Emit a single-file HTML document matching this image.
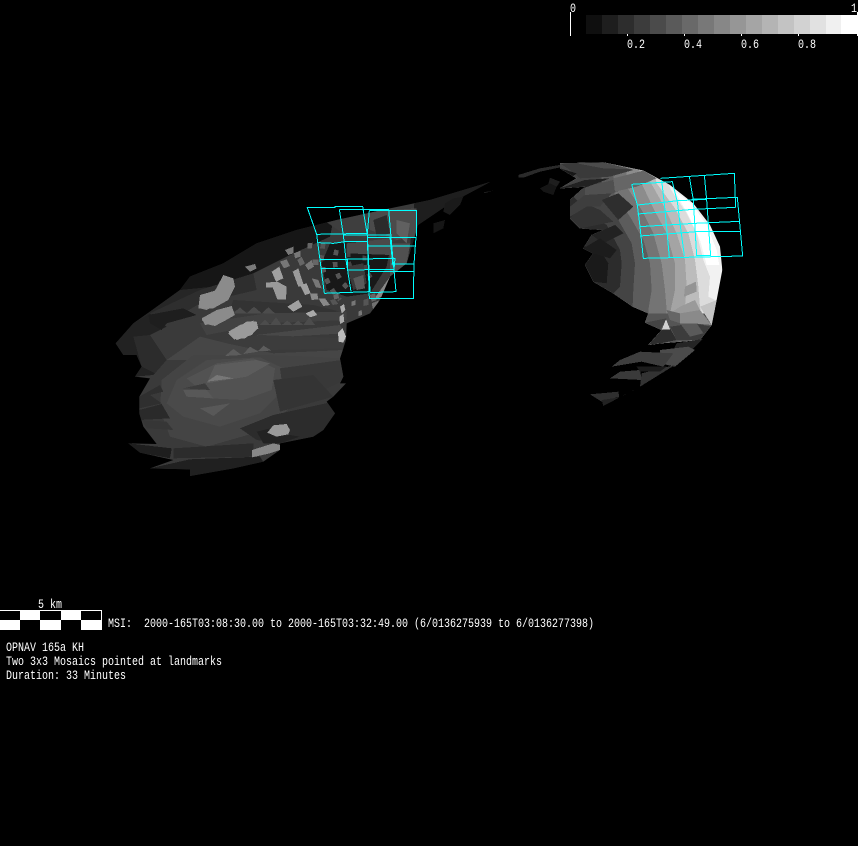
<!DOCTYPE html>
<html><head><meta charset="utf-8"><style>
html,body{margin:0;padding:0;background:#000;width:858px;height:846px;overflow:hidden}
svg{display:block}
text{font-family:"Liberation Mono",monospace;font-size:13px;fill:#fff;white-space:pre}
</style></head><body>
<svg width="858" height="846" viewBox="0 0 858 846" xmlns="http://www.w3.org/2000/svg" shape-rendering="crispEdges">
<defs>
<clipPath id="cl"><polygon points="47,190 100,130 150,95 240,30 270,-10 370,-50 470,-110 590,-150 710,-180 870,-215 990,-240 1170,-294 1050,-230 954,-165 950,-150 920,-50 870,-10 840,60 810,100 740,130 738,180 720,235 730,290 720,310 738,310 700,350 680,365 705,400 670,450 640,470 540,490 540,510 490,545 400,565 270,588 270,568 150,565 220,540 120,518 85,490 170,492 130,440 118,400 118,350 150,295 105,290 125,260 110,225 70,225"/></clipPath>
<clipPath id="cr"><polygon points="0,40 130,37 250,62 330,105 400,160 450,225 480,290 487,360 470,450 455,525 420,570 300,580 265,585 305,540 255,518 265,490 218,470 160,430 100,395 75,345 100,310 70,295 95,255 130,240 60,235 30,205 30,150 75,110 0,115 50,85 0,55"/></clipPath>
</defs>
<rect width="858" height="846" fill="#000"/>

<!-- left lobe -->
<g transform="translate(100 280) scale(.33333)">
<g clip-path="url(#cl)">
<rect x="0" y="-320" width="1200" height="920" fill="#3a3a3a"/>
<polygon fill="#1e1e1e" points="950,-300 1200,-300 1200,0 920,0"/>
<polygon fill="#161616" points="240,30 270,-10 370,-50 470,-110 590,-150 700,-180 690,-130 560,-70 460,-20 340,20 250,60"/>
<polygon fill="#262626" points="100,130 240,30 340,20 300,60 180,110 130,170"/>
<polygon fill="#2e2e2e" points="150,100 300,30 460,-20 470,30 300,70 200,130"/>
<polygon fill="#222" points="47,190 100,130 150,100 200,140 150,165 200,240 160,285 105,290 125,260 110,225 70,225"/>
<polygon fill="#1e1e1e" points="145,105 250,85 290,105 200,130 185,150 150,130"/>
<polygon fill="#2c2c2c" points="100,170 150,165 200,240 165,280 125,260"/>
<polygon fill="#424242" points="300,130 500,100 740,95 740,120 500,130 320,165"/>
<polygon fill="#333" points="400,60 640,75 720,95 500,100 390,90"/>
<polygon fill="#484848" points="470,165 720,135 735,160 560,170 500,180"/>
<polygon fill="#3c3c3c" points="300,190 480,165 730,175 730,205 500,210"/>
<polygon fill="#464646" points="200,240 300,170 380,190 520,220 730,210 730,235 520,240 330,240"/>
<polygon fill="#444" points="185,300 280,225 500,225 640,230 720,235 725,300 640,330 550,400 460,460 320,500 210,470 180,390"/>
<polygon fill="#4a4a4a" points="230,300 320,240 480,232 560,270 540,340 480,400 360,440 250,410 200,370"/>
<polygon fill="#525252" points="260,295 350,250 460,235 525,265 515,330 430,360 330,355"/>
<polygon fill="#5c5c5c" points="345,255 470,240 510,250 440,290 320,310"/>
<polygon fill="#777" points="320,305 350,285 400,295"/>
<polygon fill="#5c5c5c" points="375,228 400,207 425,225"/>
<polygon fill="#5c5c5c" points="430,222 450,200 475,215"/>
<polygon fill="#5c5c5c" points="475,213 490,197 515,212"/>
<polygon fill="#2f2f2f" points="118,350 180,315 190,335 150,345 185,370 118,385"/>
<polygon fill="#2a2a2a" points="118,390 185,372 210,415 118,420"/>
<polygon fill="#363636" points="125,420 200,425 220,450 140,445"/>
<polygon fill="#3c3c3c" points="250,325 315,310 330,330"/>
<polygon fill="#585858" points="250,330 320,330 340,355 260,350"/>
<polygon fill="#585858" points="300,385 390,370 340,408"/>
<polygon fill="#383838" points="540,265 725,240 735,300 650,340 550,340"/>
<polygon fill="#343434" points="520,300 640,285 700,350 540,395"/>
<polygon fill="#2c2c2c" points="420,445 520,405 700,365 705,400 670,450 640,470 540,490 470,480"/>
<polygon fill="#222" points="470,455 510,445 520,470 570,465 600,470 540,490 490,490"/>
<polygon fill="#1e1e1e" points="85,490 215,505 210,535 120,518"/>
<polygon fill="#2c2c2c" points="220,505 460,490 460,530 220,535"/>
<polygon fill="#202020" points="150,565 270,538 480,530 490,545 400,565 270,588 270,568"/>
<polygon fill="#999" points="502,458 520,436 560,432 570,450 565,463 530,470"/>
<polygon fill="#888" points="456,510 520,490 540,495 540,510 510,520 456,532"/>
<polygon fill="#999" points="385,155 420,135 460,122 473,145 455,165 410,180"/>
<polygon fill="#8a8a8a" points="305,115 350,90 395,78 405,105 370,125 315,135"/>
<polygon fill="#858585" points="298,60 340,42 360,70 320,90 300,85"/>
<path fill="#4c4c4c" d="M480,135L495,120L510,135ZM510,135L528,112L545,135ZM545,135L562,122L578,135ZM578,135L595,122L610,135ZM610,135L628,112L645,135ZM400,100L420,82L440,100ZM440,100L462,80L485,100ZM485,100L505,82L525,100Z"/>

<g transform="translate(270 -240)">
<polygon fill="#3e3e3e" points="400,60 600,25 680,30 670,100 600,130 460,100"/>
<polygon fill="#4b4b4b" points="540,35 680,25 680,110 620,120 540,90"/>
<polygon fill="#2b2b2b" points="550,60 590,45 600,100 560,110"/>
<polygon fill="#606060" points="620,60 660,70 650,130 620,100"/>
<polygon fill="#181818" points="420,130 520,125 600,150 590,200 540,280 470,290 410,270 395,190"/>
<path fill="none" stroke="#555" stroke-width="14" stroke-dasharray="16 20" d="M400,130Q380,220 450,300M440,150Q420,220 480,270"/>
<path fill="none" stroke="#444" stroke-width="12" stroke-dasharray="14 14" d="M480,130Q460,200 520,260M530,140Q510,200 550,240"/>
<polygon fill="#3a3a3a" points="470,200 520,190 530,250 490,270"/>
<polygon fill="#5a5a5a" points="490,235 520,225 525,265 500,270"/>
<polygon fill="#888" points="550,300 600,230 610,225 575,290"/>
<polygon fill="#4a4a4a" points="470,130 600,115 605,165 470,160"/>
<polygon fill="#505050" points="600,130 660,130 650,190 600,230"/>
<polygon fill="#777" points="270,185 290,178 300,198 282,205"/>
<polygon fill="#8b8b8b" points="30,285 75,272 100,225 130,235 135,260 115,300 70,325 25,325"/>
<polygon fill="#8b8b8b" points="35,360 100,325 120,320 135,345 75,378 48,372"/>
<polygon fill="#9a9a9a" points="115,400 170,365 200,365 205,385 165,415 132,418"/>
<polygon fill="#7a7a7a" points="165,200 195,192 200,205 180,215"/>
<polygon fill="#a0a0a0" points="245,215 268,200 280,235 258,245"/>
<polygon fill="#9a9a9a" points="228,248 262,245 290,260 288,298 262,298 248,262 228,262"/>
<polygon fill="#a0a0a0" points="292,320 325,300 337,320 310,335"/>
<polygon fill="#a8a8a8" points="347,340 370,330 382,345 360,352"/>
<polygon fill="#9a9a9a" points="308,215 325,205 342,258 325,260"/>
<polygon fill="#a0a0a0" points="330,255 350,250 362,280 345,285"/>
<polygon fill="#888" points="360,280 382,280 385,298 365,300"/>
<polygon fill="#888" points="385,295 405,295 420,315 400,318"/>
<polygon fill="#777" points="345,195 365,180 372,200 355,210"/>
<polygon fill="#666" points="322,180 335,170 345,190 330,198"/>
<polygon fill="#777" points="365,235 385,240 395,265 378,262"/>
<polygon fill="#777" points="312,160 332,152 332,170 315,175"/>
<polygon fill="#777" points="285,150 310,140 310,160 295,165"/>
<polygon fill="#666" points="352,130 368,128 365,145 352,145"/>
<polygon fill="#666" points="367,178 385,178 385,195 370,195"/>
<polygon fill="#666" points="430,285 445,280 447,295 432,298"/>
<polygon fill="#555" points="420,300 435,298 445,312 428,315"/>
<polygon fill="#707070" points="545,310 565,302 570,335 552,340"/>
<polygon fill="#666" points="540,285 555,280 560,300 545,305"/>
<polygon fill="#555" points="520,300 535,295 535,315 520,318"/>
<polygon fill="#777" points="485,305 497,300 497,315 485,318"/>
</g>
</g>
<g transform="translate(270 -240)">
<polygon fill="#aaa" points="450,320 462,312 466,330 455,340"/>
<polygon fill="#aaa" points="448,350 460,342 463,365 450,372"/>
<polygon fill="#bbb" points="444,398 458,385 468,410 460,428 446,425"/>
<polygon fill="#777" points="505,335 515,330 516,345 506,348"/>
</g>
</g>

<!-- thin middle ridge -->
<g transform="translate(410 155) scale(.33333)">
<polygon fill="#1a1a1a" points="105,145 130,130 160,125 150,150 120,180 100,170"/>
<polygon fill="#1c1c1c" points="220,112 248,107 225,115"/>
<polygon fill="#161616" points="70,205 105,195 100,220 70,235"/>
<polygon fill="#2a2a2a" points="325,60 390,40 460,28 460,35 390,50 340,68 325,68"/>
<polygon fill="#1e1e1e" points="420,68 450,80 440,95 415,88"/>
<polygon fill="#151515" points="390,100 420,85 440,95 430,120 400,110"/>
</g>

<!-- right lobe -->
<g transform="translate(560 150) scale(.33333)">
<g clip-path="url(#cr)">
<rect x="-10" y="0" width="520" height="600" fill="#f2f2f2"/>
<polygon fill="#fff" points="345,125 395,160 440,225 470,300 478,345 440,345 420,270 385,195"/>
<polygon fill="#dcdcdc" points="-10,0 310,0 330,115 380,190 410,250 430,330 450,380 445,440 465,450 470,600 -10,600"/>
<polygon fill="#bcbcbc" points="-10,0 270,0 290,100 345,175 385,250 405,330 415,410 420,470 440,600 -10,600"/>
<polygon fill="#a4a4a4" points="-10,0 250,0 265,85 310,165 350,250 375,330 380,410 375,470 390,600 -10,600"/>
<polygon fill="#8c8c8c" points="-10,0 230,0 240,90 280,175 320,250 345,340 345,420 330,490 340,600 -10,600"/>
<polygon fill="#747474" points="-10,0 200,0 200,110 245,180 280,250 305,340 315,420 320,480 320,600 -10,600"/>
<polygon fill="#5c5c5c" points="-10,0 160,0 160,125 210,200 250,270 270,340 275,420 265,480 265,600 -10,600"/>
<polygon fill="#444" points="-10,0 125,0 125,150 175,210 215,280 225,340 220,420 218,465 218,600 -10,600"/>
<polygon fill="#2c2c2c" points="-10,90 100,200 140,225 180,300 185,340 180,410 160,430 -10,500"/>
<polygon fill="#1a1a1a" points="40,290 80,290 120,300 145,340 140,400 100,395 40,380"/>
<polygon fill="#222" points="60,235 130,240 165,225 190,250 130,280 95,255"/>
<polygon fill="#333" points="30,205 75,160 120,180 160,215 60,235"/>
<polygon fill="#3e3e3e" points="30,170 80,130 160,125 120,170 80,170 30,200"/>
<polygon fill="#1c1c1c" points="70,295 120,265 170,300 150,325 100,310"/>
<polygon fill="#505050" points="75,110 160,90 240,65 225,100 160,130 75,135"/>
<polygon fill="#666" points="160,85 250,62 290,85 230,110 165,125"/>
<polygon fill="#3a3a3a" points="0,40 130,37 220,60 150,80 60,85 30,60"/>
<polygon fill="#4c4c4c" points="50,40 130,37 215,58 130,55"/>
<polygon fill="#181818" points="0,55 50,70 30,85"/>
<polygon fill="#222" points="0,115 75,90 150,85 70,115"/>
<polygon fill="#2e2e2e" points="125,150 175,130 220,170 175,210"/>
<!-- lower facets -->
<polygon fill="#555" points="255,490 470,490 470,600 255,600"/>
<polygon fill="#949494" points="375,410 408,395 410,425 372,440"/>
<polygon fill="#9a9a9a" points="330,490 360,470 405,450 420,480 360,490"/>
<polygon fill="#666" points="320,480 360,490 360,520 330,510"/>
<polygon fill="#8a8a8a" points="360,490 420,480 455,525 400,520 360,520"/>
<polygon fill="#c4c4c4" points="420,470 470,450 455,525"/>
<polygon fill="#444" points="255,518 295,510 320,505 300,540"/>
<polygon fill="#2d2d2d" points="265,585 305,540 330,535 350,570 300,580"/>
<polygon fill="#3c3c3c" points="330,530 400,520 455,530 420,570 350,570"/>
<polygon fill="#5a5a5a" points="360,520 410,520 430,550 390,560"/>
</g>
<polygon fill="#d0d0d0" points="306,538 318,508 330,538"/>
<polygon fill="#252525" points="350,580 428,567 385,610 340,600"/>
<polygon fill="#4b4b4b" points="300,600 385,590 405,600 345,650 300,640"/>
<polygon fill="#3e3e3e" points="155,650 180,630 240,605 340,610 310,650 245,635"/>
<polygon fill="#3a3a3a" points="180,665 240,660 245,690 150,685"/>
<polygon fill="#333" points="245,670 345,645 240,710"/>
<polygon fill="#2f2f2f" points="90,733 175,725 178,740 125,755"/>
<polygon fill="#222" points="125,750 180,742 240,710 130,768"/>
<polygon fill="#1c1c1c" points="230,650 320,650 300,665 240,665"/>
</g>

<!-- cyan: left mosaics -->
<g transform="translate(290 190) scale(.33333)" fill="none" stroke="#0ff" stroke-width="3">
<path d="M103,310L90,210L80,133L52,53L135,52L135,50L218,50L232,135L240,305L183,307L103,310"/>
<path d="M148,58L160,135L168,210L183,305"/>
<path d="M148,58H296L305,165L318,305L240,308"/>
<path d="M238,62H380V140M238,62L232,132"/>
<path d="M80,133L232,130M85,158L130,160L165,155L232,155"/>
<path d="M160,135H305"/>
<path d="M232,142H378L372,222L370,325H238L232,142"/>
<path d="M232,168L378,168"/>
<path d="M92,208L160,208L315,205L312,238L172,240L172,205"/>
<path d="M95,235H165"/>
<path d="M240,245H370M305,222H372"/>
<path d="M300,140L308,220L312,235"/>
</g>

<!-- cyan: right mosaics -->
<g transform="translate(560 150) scale(.33333)" fill="none" stroke="#0ff" stroke-width="3">
<path d="M215,103L232,165L240,230L250,325L548,318L532,142L395,148"/>
<path d="M301,85L523,70L527,172"/>
<path d="M215,103L337,95L352,155L360,220L373,318"/>
<path d="M305,90L315,180L328,322"/>
<path d="M388,80L400,150L410,318"/>
<path d="M433,75L440,150L452,318"/>
<path d="M232,165L355,152L438,148"/>
<path d="M232,192L400,178L527,172"/>
<path d="M238,230L405,220L540,214"/>
<path d="M240,258L410,245L542,244"/>
<path d="M410,316L450,316"/>
</g>

<!-- colourbar -->
<g>
<rect x="586" y="15" width="16" height="19" fill="#0f0f0f"/>
<rect x="602" y="15" width="16" height="19" fill="#1e1e1e"/>
<rect x="618" y="15" width="16" height="19" fill="#2d2d2d"/>
<rect x="634" y="15" width="16" height="19" fill="#3c3c3c"/>
<rect x="650" y="15" width="16" height="19" fill="#4b4b4b"/>
<rect x="666" y="15" width="16" height="19" fill="#5a5a5a"/>
<rect x="682" y="15" width="16" height="19" fill="#696969"/>
<rect x="698" y="15" width="16" height="19" fill="#787878"/>
<rect x="714" y="15" width="16" height="19" fill="#878787"/>
<rect x="730" y="15" width="16" height="19" fill="#969696"/>
<rect x="746" y="15" width="16" height="19" fill="#a5a5a5"/>
<rect x="762" y="15" width="16" height="19" fill="#b4b4b4"/>
<rect x="778" y="15" width="16" height="19" fill="#c3c3c3"/>
<rect x="794" y="15" width="16" height="19" fill="#d2d2d2"/>
<rect x="810" y="15" width="16" height="19" fill="#e1e1e1"/>
<rect x="826" y="15" width="15" height="19" fill="#f0f0f0"/>
<rect x="841" y="15" width="16" height="19" fill="#fff"/>
<rect x="570" y="12" width="1" height="24" fill="#fff"/>
<rect x="857" y="12" width="1" height="24" fill="#fff"/>
<rect x="627" y="34" width="1" height="2" fill="#fff"/>
<rect x="684" y="34" width="1" height="2" fill="#fff"/>
<rect x="741" y="34" width="1" height="2" fill="#fff"/>
<rect x="798" y="34" width="1" height="2" fill="#fff"/>
</g>
<text x="570" y="12" textLength="6" lengthAdjust="spacingAndGlyphs">0</text>
<text x="851" y="12" textLength="6" lengthAdjust="spacingAndGlyphs">1</text>
<text x="627" y="48" textLength="18" lengthAdjust="spacingAndGlyphs">0.2</text>
<text x="684" y="48" textLength="18" lengthAdjust="spacingAndGlyphs">0.4</text>
<text x="741" y="48" textLength="18" lengthAdjust="spacingAndGlyphs">0.6</text>
<text x="798" y="48" textLength="18" lengthAdjust="spacingAndGlyphs">0.8</text>

<!-- scale bar -->
<rect x="0" y="610" width="102" height="20" fill="#fff"/>
<rect x="0" y="611" width="20" height="9" fill="#000"/>
<rect x="40" y="611" width="21" height="9" fill="#000"/>
<rect x="81" y="611" width="20" height="9" fill="#000"/>
<rect x="20" y="620" width="20" height="10" fill="#000"/>
<rect x="61" y="620" width="20" height="10" fill="#000"/>
<text x="38" y="608" textLength="24" lengthAdjust="spacingAndGlyphs">5 km</text>

<text x="108" y="627" textLength="486" lengthAdjust="spacingAndGlyphs" xml:space="preserve">MSI:  2000-165T03:08:30.00 to 2000-165T03:32:49.00 (6/0136275939 to 6/0136277398)</text>
<text x="6" y="651" textLength="78" lengthAdjust="spacingAndGlyphs">OPNAV 165a KH</text>
<text x="6" y="665" textLength="216" lengthAdjust="spacingAndGlyphs">Two 3x3 Mosaics pointed at landmarks</text>
<text x="6" y="679" textLength="120" lengthAdjust="spacingAndGlyphs">Duration: 33 Minutes</text>
</svg>
</body></html>
